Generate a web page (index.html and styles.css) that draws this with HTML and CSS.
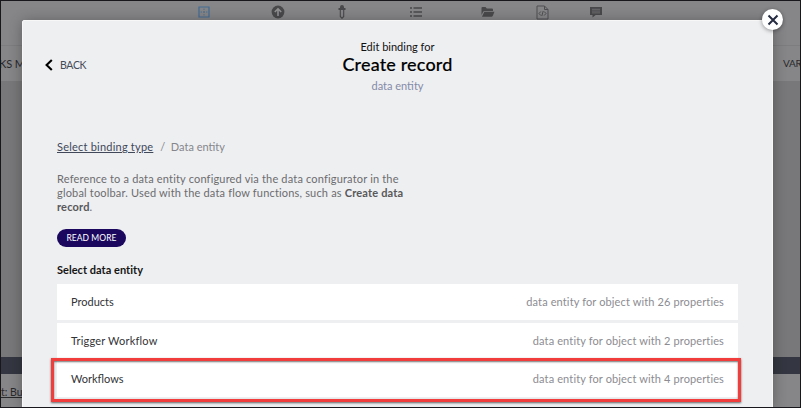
FILE: index.html
```html
<!DOCTYPE html>
<html lang="en">
<head>
<meta charset="utf-8">
<title>Edit binding</title>
<link rel="stylesheet" href="styles.css">
</head>
<body>
<div class="app">
  <div class="toolbar">
    <svg class="tool tool-grid" viewBox="0 0 12 12"><path d="M1 1h10v10H1z" fill="none" stroke="#426b94" stroke-width="1.2"/><path d="M6 2.5v1.5M6 5.2v1.6M6 8v1.5M2.5 6H4M5.2 6h1.6M8 6h1.5" stroke="#426b94" stroke-width=".8"/></svg>
    <svg class="tool tool-upload" viewBox="0 0 14 14"><circle cx="7" cy="7" r="6.4" fill="#49494c"/><path d="M7 11V4M3.8 7L7 3.8 10.2 7" fill="none" stroke="#929295" stroke-width="1.6"/></svg>
    <svg class="tool tool-picker" viewBox="0 0 8 14"><path d="M4 0a2 2 0 0 1 2 2v1h1.5v2h-7V3H2V2a2 2 0 0 1 2-2z" fill="#49494c"/><path d="M2.3 5v6.5L4 13.3l1.7-1.8V5" fill="none" stroke="#49494c" stroke-width="1.1"/></svg>
    <svg class="tool tool-list" viewBox="0 0 14 12"><path d="M1 2h2M1 6h2M1 10h2M4.5 2H13M4.5 6H13M4.5 10H13" stroke="#49494c" stroke-width="1.3"/></svg>
    <svg class="tool tool-folder" viewBox="0 0 14 12"><path d="M.5 9V2q0-1 1-1h3l1.3 1.5H11q1 0 1 1V5H3.5q-1 0-1.4 1z" fill="#49494c"/><path d="M3.3 5.7H13.5L11.7 10q-.3.8-1.3.8H1z" fill="#49494c"/></svg>
    <svg class="tool tool-code" viewBox="0 0 13 15"><path d="M1 1h7.5L12 4.5V14H1zM8.5 1v3.5H12M4.8 6.5L3 8.5l1.8 2M8.2 6.5l1.8 2-1.8 2M7.2 6l-1.4 5" fill="none" stroke="#4f4f52" stroke-width="1"/></svg>
    <svg class="tool tool-chat" viewBox="0 0 14 12"><path d="M1 1h12v8H6.7L3.5 11.5V9H1z" fill="#49494c"/><path d="M3 3.3h8M3 5.1h8M3 6.9h8" stroke="#7d7d80" stroke-width=".7"/></svg>
  </div>
  <div class="tabs"><span class="tab-left">KS M</span><span class="tab-right">VAR</span></div>
  <div class="canvas"></div>
  <div class="panel-bar"></div>
  <div class="panel"><span class="panel-link">t: But</span></div>
</div>
<section class="modal">
  <header class="head">
    <a class="back"><svg class="chevron" viewBox="0 0 8 12"><path d="M6.8 1L1.6 6l5.2 5" fill="none" stroke="#000" stroke-width="2.1"/></svg><span>BACK</span></a>
    <div class="titles">
      <div class="eyebrow">Edit binding for</div>
      <h1 class="title">Create record</h1>
      <div class="subtitle">data entity</div>
    </div>
  </header>
  <nav class="crumbs"><a class="crumb-link">Select binding type</a><span class="slash">/</span><span class="crumb">Data entity</span></nav>
  <p class="about">Reference to a data entity configured via the data configurator in the<br>global toolbar. Used with the data flow functions, such as <b>Create data</b><br><b>record</b>.</p>
  <button class="more">READ MORE</button>
  <h2 class="label">Select data entity</h2>
  <div class="rows">
    <div class="row"><span class="name">Products</span><span class="kind">data entity for object with 26 properties</span></div>
    <div class="row"><span class="name name-wide">Trigger Workflow</span><span class="kind">data entity for object with 2 properties</span></div>
    <div class="row"><span class="name">Workflows</span><span class="kind">data entity for object with 4 properties</span></div>
  </div>
</section>
<button class="close" aria-label="Close"><svg class="x" viewBox="0 0 12 12"><path d="M1.5 1.5l9 9M10.5 1.5l-9 9" stroke="#252c40" stroke-width="2"/></svg></button>
<div class="highlight"></div>
<div class="frame"></div>
</body>
</html>
```

FILE: styles.css
```css
* { box-sizing: border-box; }
body { margin: 0; width: 801px; height: 408px; position: relative; overflow: hidden; font-family: Lato, "Liberation Sans", sans-serif; font-size: 11px; color: #333; background: #777; }
button { border: 0; padding: 0; font-family: inherit; }
.app { height: 408px; display: flex; flex-direction: column; }
.toolbar { height: 46px; background: #868689; display: flex; align-items: flex-start; padding: 6px 0 0 198px; border-bottom: 1px solid #7d7d80; }
.tool { display: block; flex: none; }
.tool-grid { width: 12px; height: 12px; }
.tool-upload { width: 14px; height: 14px; margin-left: 61px; margin-top: -1px; }
.tool-picker { width: 8px; height: 14px; margin-left: 53px; margin-top: -1px; }
.tool-list { width: 14px; height: 12px; margin-left: 63px; }
.tool-folder { width: 14px; height: 12px; margin-left: 58px; }
.tool-code { width: 13px; height: 15px; margin-left: 41px; margin-top: -1px; }
.tool-chat { width: 14px; height: 12px; margin-left: 40px; }
.tabs { height: 35px; background: #868688; display: flex; justify-content: space-between; align-items: center; color: #29292c; }
.tab-left { margin-left: -1px; letter-spacing: -.1px; }
.tab-right { width: 18px; font-size: 10px; letter-spacing: -.3px; white-space: nowrap; margin-bottom: 2px; }
.canvas { height: 276px; background: #78787a; }
.panel-bar { height: 17px; background: #343741; }
.panel { flex: 1; background: #868688; padding: 11px 0 0 1px; }
.panel-link { display: block; width: 40px; font-size: 10.5px; line-height: 13px; text-decoration: underline; color: #29292c; margin-top: 1px; }
.modal { position: absolute; left: 22px; top: 20px; width: 751px; height: 388px; padding: 19px 35px 0 34px; background: #eeeff1; border: 1px solid #f7f7f8; border-radius: 2px 2px 0 0; box-shadow: 0 1px 14px rgba(0,0,0,.3); }
.head { display: grid; grid-template-columns: 100px 1fr 100px; margin: 0 -36px 0 -35px; height: 100px; }
.back { display: flex; align-items: center; gap: 7px; height: 14px; margin: 18px 0 0 23px; font-size: 10.5px; color: #454b59; letter-spacing: -.35px; }
.chevron { width: 8px; height: 12px; }
.titles { text-align: center; }
.eyebrow { font-size: 11px; line-height: 14px; color: #111; }
.title { margin: 0; font-size: 18px; line-height: 21px; font-weight: 500; color: #000; letter-spacing: .15px; -webkit-text-stroke: .15px; }
.subtitle { font-size: 11px; line-height: 14px; margin-top: 4px; color: #848ba8; }
.crumbs { display: flex; line-height: 14px; height: 14px; color: #85868c; }
.crumb-link { color: #40485a; text-decoration: underline; letter-spacing: .22px; margin-right: 7px; }
.slash { width: 10.5px; }
.about { margin: 18px 0 0; line-height: 14px; color: #6c6c6f; white-space: nowrap; letter-spacing: .175px; }
.about b { font-weight: 700; color: #58585b; }
.more { display: block; width: 69px; height: 18px; margin-top: 15px; border-radius: 9px; background: #1b085e; color: #fff; font-size: 8.5px; line-height: 18px; letter-spacing: .05px; }
.label { margin: 16px 0 7px; font-size: 11px; line-height: 14px; font-weight: 700; color: #151515; letter-spacing: .03px; }
.rows { display: grid; gap: 3px; width: 681px; }
.row { height: 35.7px; background: #fff; display: flex; justify-content: space-between; align-items: center; padding: 0 14px 1px; color: #333336; }
.name-wide { letter-spacing: .2px; }
.kind { color: #8c8c92; letter-spacing: .125px; }
.close { position: absolute; left: 762px; top: 9px; width: 21px; height: 21px; border-radius: 50%; background: #fff; display: flex; align-items: center; justify-content: center; box-shadow: 0 1px 4px rgba(0,0,0,.4); }
.x { width: 12px; height: 12px; }
.highlight { position: absolute; left: 51px; top: 358px; width: 690px; height: 43.5px; border: 3px solid #f13e3d; box-shadow: 0 1px 2px rgba(0,0,0,.6), inset 0 1px 2px rgba(0,0,0,.55); }
.frame { position: absolute; inset: 0; border: 1px solid #18181c; }
```
